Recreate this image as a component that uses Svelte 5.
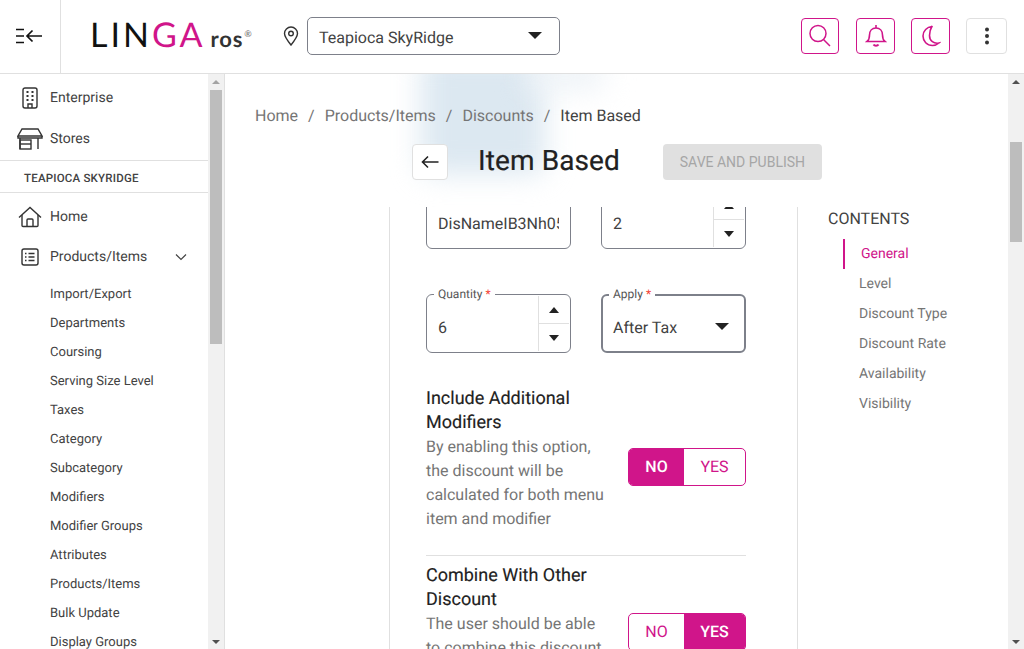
<script>
  const topItems = [
    { label: 'Enterprise', icon: 'building' },
    { label: 'Stores', icon: 'store' }
  ];
  const subItems = ['Import/Export', 'Departments', 'Coursing', 'Serving Size Level', 'Taxes', 'Category', 'Subcategory', 'Modifiers', 'Modifier Groups', 'Attributes', 'Products/Items', 'Bulk Update', 'Display Groups'];
  const contents = ['General', 'Level', 'Discount Type', 'Discount Rate', 'Availability', 'Visibility'];
</script>

<div class="page">
  <header>
    <button class="menu" aria-label="Collapse menu">
      <svg width="28" height="18" viewBox="0 0 28 18" fill="none" stroke="#111" stroke-width="1.7">
        <path d="M1 2.5h8M1 9h8M1 15.500h8M27 9H12M17.500 3.500 12 9l5.500 5.500" />
      </svg>
    </button>
    <div class="logo"><span class="lin">LIN</span><span class="ga">GA</span><span class="ros">ros</span><span class="reg">®</span></div>
    <svg class="pin" width="16" height="20" viewBox="0 0 16 20" fill="none" stroke="#333" stroke-width="1.4">
      <path d="M8 19C4 14 1.500 10.500 1.500 7.500a6.500 6.500 0 0 1 13 0C14.500 10.500 12 14 8 19Z" />
      <circle cx="8" cy="7.500" r="2.300" />
    </svg>
    <div class="store-select">
      <span>Teapioca SkyRidge</span>
      <i class="caret big"></i>
    </div>
    <div class="actions">
      <button class="icon-btn" aria-label="Search">
        <svg width="24" height="24" viewBox="0 0 24 24" fill="none" stroke="#d0158a" stroke-width="1.500">
          <circle cx="10" cy="9.500" r="8" /><path d="M15.500 15.500l6.500 6.500" />
        </svg>
      </button>
      <button class="icon-btn wide" aria-label="Notifications">
        <svg width="22" height="24" viewBox="0 0 22 24" fill="none" stroke="#d0158a" stroke-width="1.600">
          <path d="M2 17.500c2-1.500 2.500-3 2.500-6.500 0-4 2.500-7 6.500-7s6.500 3 6.500 7c0 3.500.5 5 2.500 6.500Z" />
          <path d="M11 1v3" /><path d="M8.500 20.500c1 1.600 4 1.600 5 0" stroke-width="2" />
        </svg>
      </button>
      <button class="icon-btn wide moon" aria-label="Dark mode">
        <svg width="20" height="22" viewBox="0 0 20 22" fill="none" stroke="#d0158a" stroke-width="1.600">
          <path d="M11 1.500C6 2 2 5.800 2 11s4 9.500 9.500 9.500c2.500 0 4.500-.8 6.500-2.500-5 1-9.500-2-9.500-7.500 0-3.700 1-6.700 2.500-9.500Z" />
        </svg>
      </button>
      <button class="icon-btn more" aria-label="More">
        <svg width="6" height="18" viewBox="0 0 6 18" fill="#333">
          <circle cx="3" cy="2.500" r="2" /><circle cx="3" cy="9" r="2" /><circle cx="3" cy="15.500" r="2" />
        </svg>
      </button>
    </div>
  </header>

  <div class="body">
    <aside>
      <nav>
        {#each topItems as item}
          <div class="nav-row">
            {#if item.icon === 'building'}
              <svg width="26" height="22" viewBox="0 0 26 22" fill="none" stroke="#333" stroke-width="1.400">
                <rect x="6" y="1" width="14" height="20" rx="2" />
                <path d="M11 21v-4h4v4" />
                <path d="M9.500 5h2M14.500 5h2M9.500 9h2M14.500 9h2M9.500 13h2M14.500 13h2" stroke-width="2" />
              </svg>
            {:else}
              <svg width="26" height="22" viewBox="0 0 26 22" fill="none" stroke="#333" stroke-width="1.400">
                <path d="M5 1h16l4 7H1Z" /><path d="M1 8v2h24V8" />
                <path d="M3 10v11M21 10v11" /><rect x="3" y="12" width="11" height="9" /><path d="M3 16h11" />
              </svg>
            {/if}
            <span>{item.label}</span>
          </div>
        {/each}
        <div class="store-name">TEAPIOCA SKYRIDGE</div>
        <div class="nav-row home">
          <svg width="26" height="22" viewBox="0 0 26 22" fill="none" stroke="#333" stroke-width="1.400">
            <path d="M2 11.500 13 1.500l11 10" /><path d="M5 9v10.500a1 1 0 0 0 1 1h14a1 1 0 0 0 1-1V9" />
            <path d="M10 20.500V14a1 1 0 0 1 1-1h4a1 1 0 0 1 1 1v6.500" />
          </svg>
          <span>Home</span>
        </div>
        <div class="nav-row products">
          <svg width="26" height="22" viewBox="0 0 26 22" fill="none" stroke="#333" stroke-width="1.400">
            <rect x="5" y="3" width="16" height="16" rx="2" />
            <path d="M8 7.500h1.500M8 11h1.500M8 14.500h1.500M11.500 7.500h6M11.500 11h6M11.500 14.500h6" />
          </svg>
          <span>Products/Items</span>
          <svg class="chevron" width="12" height="8" viewBox="0 0 12 8" fill="none" stroke="#444" stroke-width="1.200">
            <path d="M1 1.500 6 6.500l5-5" />
          </svg>
        </div>
        <ul>
          {#each subItems as sub}
            <li>{sub}</li>
          {/each}
        </ul>
      </nav>
      <div class="scrollbar side">
        <i class="arrow up grey"></i>
        <div class="thumb"></div>
        <i class="arrow down"></i>
      </div>
    </aside>

    <main>
      <div class="smudge"></div>
      <div class="smudge faint"></div>
      <div class="crumbs">
        <span>Home</span><em>/</em><span>Products/Items</span><em>/</em><span>Discounts</span><em>/</em><span class="current">Item Based</span>
      </div>
      <div class="title-row">
        <button class="back" aria-label="Back">
          <svg width="18" height="14" viewBox="0 0 18 14" fill="none" stroke="#222" stroke-width="1.600">
            <path d="M17.500 7H1.500M7 1.500 1.500 7 7 12.500" />
          </svg>
        </button>
        <h1>Item Based</h1>
        <button class="save">SAVE AND PUBLISH</button>
      </div>

      <div class="columns">
        <div class="card">
          <div class="card-inner">
            <div class="fields">
              <div class="field"><div class="value clip">DisNameIB3Nh05</div></div>
              <div class="field number">
                <div class="value">2</div>
                <div class="stepper"><span><i class="caret up"></i></span><span><i class="caret"></i></span></div>
              </div>
              <div class="field number">
                <label>Quantity <b>*</b></label>
                <div class="value">6</div>
                <div class="stepper"><span><i class="caret up"></i></span><span><i class="caret"></i></span></div>
              </div>
              <div class="field focus">
                <label>Apply <b>*</b></label>
                <div class="value">After Tax</div>
                <i class="caret big"></i>
              </div>
            </div>

            <section class="option first">
              <div class="copy">
                <h3>Include Additional Modifiers</h3>
                <p>By enabling this option, the discount will be calculated for both menu item and modifier</p>
              </div>
              <div class="toggle"><span class="on">NO</span><span>YES</span></div>
            </section>
            <section class="option second">
              <div class="copy">
                <h3>Combine With Other Discount</h3>
                <p>The user should be able to combine this discount with other discounts</p>
              </div>
              <div class="toggle"><span>NO</span><span class="on">YES</span></div>
            </section>
          </div>
        </div>

        <div class="contents">
          <h4>CONTENTS</h4>
          <ul>
            {#each contents as item, i}
              <li class:active={i === 0}>{item}</li>
            {/each}
          </ul>
        </div>
      </div>
      <div class="scrollbar page-bar">
        <i class="arrow up"></i>
        <div class="thumb"></div>
        <i class="arrow down"></i>
      </div>
    </main>
  </div>
</div>

<style>
  :global(body) {
    margin: 0;
    font-family: Roboto, "Liberation Sans", sans-serif;
    background: #fff;
    overflow: hidden;
    text-rendering: geometricPrecision;
  }
  button {
    font-family: inherit;
    background: #fff;
    padding: 0;
    display: flex;
    align-items: center;
    justify-content: center;
  }
  .page {
    width: 1024px;
    height: 649px;
    display: flex;
    flex-direction: column;
    overflow: hidden;
  }
  header {
    height: 73px;
    flex: none;
    display: flex;
    align-items: center;
    border-bottom: 1px solid #e0e0e0;
  }
  .menu {
    width: 61px;
    height: 73px;
    border: 0;
    border-right: 1px solid #e0e0e0;
    padding-right: 2px;
    padding-bottom: 1px;
  }
  .logo {
    margin-left: 29px;
    width: 163px;
    display: flex;
    align-items: baseline;
    font-family: Lato, sans-serif;
    font-size: 34px;
    letter-spacing: 3px;
    white-space: nowrap;
    padding-bottom: 4px;
  }
  .lin { color: #111; font-weight: 400; }
  .ga { color: #d0158a; font-weight: 400; }
  .ros { color: #333; font-size: 22px; font-weight: 700; margin-left: 5px; letter-spacing: 0.800px; }
  .reg { color: #666; font-size: 9px; letter-spacing: 0; align-self: center; margin-bottom: 2px; margin-left: 1px; }
  .pin { margin-left: 30px; flex: none; margin-bottom: 2px; }
  .store-select {
    margin-left: 8px;
    width: 253px;
    height: 38px;
    box-sizing: border-box;
    border: 1px solid #7d808a;
    border-radius: 5px;
    display: flex;
    align-items: center;
    justify-content: space-between;
    padding: 3px 17px 0 11px;
    font-size: 16px;
    color: #424242;
    margin-bottom: 1px;
  }
  .store-select .caret { margin-top: -5px; }
  .actions {
    margin-left: auto;
    margin-right: 17px;
    display: flex;
    gap: 17px;
    margin-bottom: 1px;
  }
  .icon-btn {
    width: 38px;
    height: 36px;
    border: 1px solid #d0158a;
    border-radius: 4px;
  }
  .icon-btn.wide { width: 39px; }
  .icon-btn.moon { margin-left: -1px; }
  .icon-btn.more {
    width: 41px;
    border-color: #e0e0e0;
    margin-left: -1px;
  }
  .caret {
    width: 0;
    height: 0;
    border-left: 5.500px solid transparent;
    border-right: 5.500px solid transparent;
    border-top: 6px solid #222;
    display: block;
  }
  .caret.up { border-top: 0; border-bottom: 6px solid #222; }
  .caret.big { border-left-width: 7px; border-right-width: 7px; border-top-width: 7px; }
  .body {
    flex: 1;
    display: flex;
    min-height: 0;
  }
  aside {
    width: 225px;
    flex: none;
    box-sizing: border-box;
    border-right: 1px solid #e0e0e0;
    display: flex;
    overflow: hidden;
  }
  nav { width: 208px; flex: none; }
  .nav-row {
    height: 41px;
    display: flex;
    align-items: center;
    padding-left: 17px;
    gap: 7px;
    font-size: 14px;
    color: #424242;
  }
  .nav-row:first-child { height: 43px; padding-top: 2px; }
  .nav-row:nth-child(2) { height: 31px; padding-top: 4px; }
  .store-name {
    height: 29px;
    padding-top: 2px;
    border-top: 1px solid #e0e0e0;
    border-bottom: 1px solid #e0e0e0;
    margin-top: 6px;
    padding-left: 24px;
    display: flex;
    align-items: center;
    font-size: 11.500px;
    font-weight: 500;
    color: #424242;
    letter-spacing: 0.200px;
  }
  .nav-row.home { height: 47px; }
  .nav-row.products { height: 34px; position: relative; }
  .chevron { margin-left: auto; margin-right: 21px; }
  nav ul {
    list-style: none;
    margin: 0;
    padding: 6px 0 0 50px;
  }
  nav li {
    height: 29px;
    line-height: 29px;
    font-size: 13px;
    color: #424242;
    white-space: nowrap;
  }
  .scrollbar {
    width: 16px;
    flex: none;
    background: #f1f1f1;
    display: flex;
    flex-direction: column;
    align-items: center;
    position: relative;
  }
  .side { height: 575px; }
  .thumb {
    width: 12px;
    background: #bdbdbd;
  }
  .side .thumb { height: 254px; margin-top: 16px; }
  .arrow {
    position: absolute;
    left: 4px;
    width: 0;
    height: 0;
    border-left: 4px solid transparent;
    border-right: 4px solid transparent;
  }
  .arrow.up { top: 6px; border-bottom: 4px solid #505050; }
  .arrow.up.grey { border-bottom-color: #a3a3a3; }
  .arrow.down { bottom: 5px; border-top: 4px solid #505050; }
  main {
    flex: 1;
    min-width: 0;
    position: relative;
    overflow: hidden;
    padding-right: 16px;
  }
  /* blurred backdrop showing behind the page heading */
  .smudge {
    position: absolute;
    left: 196px;
    top: -20px;
    width: 124px;
    height: 120px;
    background: #dce8f1;
    filter: blur(14px);
    border-radius: 12px;
  }
  .smudge.faint {
    left: 300px;
    top: -14px;
    width: 80px;
    height: 30px;
    background: #eef3f7;
  }
  .crumbs, .title-row, .columns { position: relative; }
  .crumbs {
    padding: 32px 0 0 30px;
    height: 20px;
    line-height: 20px;
    display: flex;
    font-size: 16px;
    color: #757575;
  }
  .crumbs em { font-style: normal; margin: 0 10px; }
  .crumbs .current { color: #424242; }
  .title-row {
    margin-top: 18px;
    height: 36px;
    padding-left: 1px;
    display: flex;
    align-items: center;
    justify-content: center;
  }
  .back {
    width: 36px;
    height: 36px;
    box-sizing: border-box;
    border: 1px solid #e0e0e0;
    border-radius: 4px;
  }
  h1 {
    margin: 0 43px 0 30px;
    padding-bottom: 4px;
    font-size: 28px;
    font-weight: 400;
    letter-spacing: 0.100px;
    color: #212121;
    -webkit-text-stroke: 0.200px #212121;
    white-space: nowrap;
  }
  .save {
    width: 159px;
    height: 36px;
    border: 0;
    border-radius: 4px;
    background: #e0e0e0;
    color: #a6a6a6;
    font-size: 14px;
    font-weight: 400;
  }
  .columns {
    margin-top: 27px;
    display: flex;
    height: 442px;
    padding-left: 164px;
  }
  .card {
    width: 409px;
    box-sizing: border-box;
    border-left: 1px solid #e0e0e0;
    border-right: 1px solid #e0e0e0;
    overflow: hidden;
    padding: 0 51px 0 36px;
  }
  .card-inner { margin-top: -17px; }
  .fields {
    display: grid;
    grid-template-columns: 145px 145px;
    column-gap: 30px;
    row-gap: 45px;
  }
  .field {
    height: 59px;
    box-sizing: border-box;
    border: 1px solid #7d808a;
    border-radius: 6px;
    position: relative;
    display: flex;
    align-items: center;
    padding: 0 11px;
    font-size: 16px;
    color: #424242;
  }
  .field label {
    position: absolute;
    left: 7px;
    top: -6px;
    padding: 0 4px;
    background: #fff;
    font-size: 12px;
    line-height: 10px;
    color: #555;
  }
  .field label b { color: #f44336; font-weight: 400; }
  .value { padding-top: 8px; }
  .value.clip {
    width: 122px;
    overflow: hidden;
    white-space: nowrap;
  }
  .field.focus {
    border-width: 2px;
    padding: 0 15px 0 10px;
    justify-content: space-between;
  }
  .field.focus label { left: 6px; top: -7px; }
  .field.focus .caret { margin-top: 5px; }
  .stepper {
    position: absolute;
    right: 1px;
    top: 1px;
    bottom: 1px;
    width: 30px;
    border-left: 1px solid #e0e0e0;
    display: flex;
    flex-direction: column;
  }
  .stepper span {
    flex: 1;
    display: flex;
    align-items: center;
    justify-content: center;
  }
  .stepper span + span { border-top: 1px solid #e0e0e0; }
  .option {
    display: flex;
    justify-content: space-between;
    align-items: flex-start;
  }
  .option.first {
    margin-top: 34px;
    padding-bottom: 24px;
    border-bottom: 1px solid #e0e0e0;
  }
  .option.second { margin-top: 8px; }
  .first .toggle { margin-top: 61px; }
  .second .toggle { margin-top: 49px; }
  .copy { width: 178px; }
  h3 {
    margin: 0;
    font-size: 18px;
    font-weight: 400;
    line-height: 24px;
    color: #212121;
    -webkit-text-stroke: 0.150px #212121;
  }
  p {
    margin: 0;
    font-size: 16px;
    line-height: 24px;
    color: #757575;
  }
  .toggle {
    width: 118px;
    height: 38px;
    box-sizing: border-box;
    border: 1px solid #d0158a;
    border-radius: 5px;
    display: flex;
    overflow: hidden;
    flex: none;
  }
  .toggle span {
    flex: 1;
    display: flex;
    align-items: center;
    justify-content: center;
    padding-bottom: 1px;
    font-size: 16px;
    color: #d0158a;
  }
  .toggle span:first-child { flex: 0 0 55px; }
  .toggle span.on {
    background: #d0158a;
    color: #fff;
    font-weight: 500;
  }
  .contents { margin-left: 30px; }
  h4 {
    margin: 0;
    padding-top: 2px;
    font-size: 16px;
    font-weight: 400;
    line-height: 19px;
    color: #424242;
  }
  .contents ul {
    list-style: none;
    margin: 11px 0 0 15px;
    padding: 0;
  }
  .contents li {
    height: 30px;
    line-height: 30px;
    padding-left: 14px;
    border-left: 2px solid transparent;
    font-size: 14px;
    color: #757575;
  }
  .contents li.active {
    color: #d0158a;
    border-left-color: #d0158a;
    padding-left: 16px;
  }
  .page-bar {
    position: absolute;
    right: 0;
    top: 0;
    height: 575px;
  }
  .page-bar .thumb { height: 100px; margin-top: 68px; }
</style>
